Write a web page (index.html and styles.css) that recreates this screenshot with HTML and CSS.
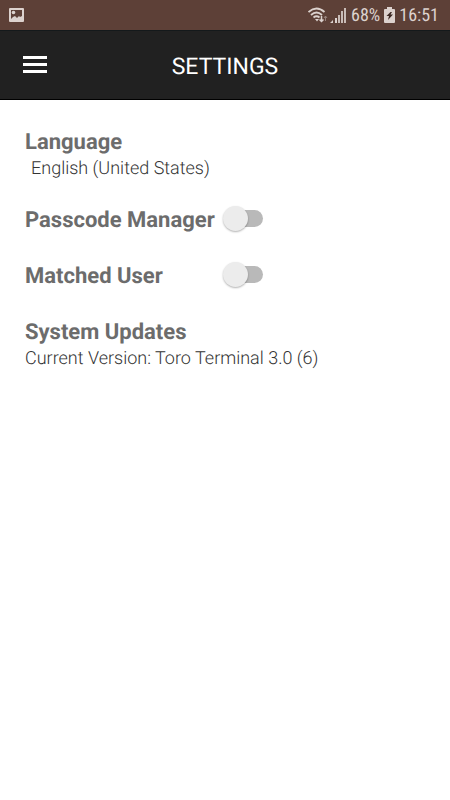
FILE: index.html
```html
<!DOCTYPE html>
<html lang="en">
<head>
<meta charset="utf-8">
<meta name="viewport" content="width=device-width, initial-scale=1">
<title>Settings</title>
<link rel="stylesheet" href="styles.css">
</head>
<body>
<div class="status">
  <svg width="15" height="14" viewBox="0 0 15 14" aria-hidden="true">
    <rect width="15" height="14" rx="1" fill="#dcd2ce"/>
    <path d="M2 2h11v6l-2 1-1-1-2 2-2-2-2 1-2 2z" fill="#5d4037"/>
    <circle cx="4.500" cy="4.500" r="1.800" fill="#dcd2ce"/>
  </svg>
  <div class="status-right">
    <svg width="20" height="16" viewBox="0 0 20 16" fill="none" stroke="#dcd2ce" stroke-width="1.800" aria-hidden="true">
      <path d="M.5 5Q8.500-2 16.500 5M3 8Q8.500 3 14 8M5.500 10.500Q8.500 8 11.500 10.500"/>
      <path d="M7 12h4l-2 2.500z" fill="#dcd2ce" stroke="none"/>
      <path d="M13.500 9v6M11.500 12.500l2 2 2-2" stroke-width="1.500"/>
      <path d="M17.500 14V9M16 11l1.500-2 1.500 2" stroke="#98847d" stroke-width="1"/>
    </svg>
    <svg class="signal" width="16" height="15" viewBox="0 0 16 15" fill="#dcd2ce" aria-hidden="true">
      <path d="M0 15l3-3v3zM5 10h2v5H5z"/>
      <path d="M8 7h2v8H8zM11 3h2v12h-2zM14 0h2v15h-2z" opacity=".85"/>
    </svg>
    <span class="battery-text">68%</span>
    <svg class="battery" width="11" height="16" viewBox="0 0 11 16" aria-hidden="true">
      <path d="M3 0h5v2h2a1 1 0 0 1 1 1v12a1 1 0 0 1-1 1H1a1 1 0 0 1-1-1V3a1 1 0 0 1 1-1h2z" fill="#dcd2ce"/>
      <path d="M6.500 5L2.500 9H5l-1 4 5-5.500H6.500L8 5z" fill="#3b2823"/>
    </svg>
    <span>16:51</span>
  </div>
</div>
<header class="bar">
  <button class="menu" type="button" aria-label="Menu">
    <svg width="24" height="18" viewBox="0 0 24 18" fill="#fff" aria-hidden="true">
      <path d="M0 0h24v3H0zM0 7h24v3H0zM0 14h24v3H0z"/>
    </svg>
  </button>
  <h1>SETTINGS</h1>
</header>
<main>
  <section>
    <h2>Language</h2>
    <p class="language">English (United States)</p>
  </section>
  <div class="toggles">
    <label for="passcode">Passcode Manager</label>
    <input id="passcode" class="switch" type="checkbox" role="switch">
    <label for="matched">Matched User</label>
    <input id="matched" class="switch" type="checkbox" role="switch">
  </div>
  <section>
    <h2>System Updates</h2>
    <p>Current Version: Toro Terminal 3.0 (6)</p>
  </section>
</main>
</body>
</html>
```
FILE: styles.css
```css
* {
  box-sizing: border-box;
}

body {
  margin: 0;
  background: #fff;
  color: #6c6c6c;
  font-family: Roboto, sans-serif;
  text-rendering: geometricPrecision;
}

h1, h2, p {
  margin: 0;
}

.status {
  display: flex;
  align-items: center;
  justify-content: space-between;
  height: 30px;
  padding: 0 11px 0 9px;
  background: #5d4037;
  color: #dcd2ce;
  font-family: "Roboto Condensed", Roboto, sans-serif;
  font-size: 18px;
}

.status-right {
  display: flex;
  align-items: center;
}

.signal {
  margin-left: 2px;
}

.battery-text {
  margin-left: 5px;
}

.battery {
  margin: 0 4px;
}

.bar {
  display: grid;
  grid-template-columns: 70px 1fr 70px;
  align-items: center;
  height: 70px;
  border-top: 1px solid #14191b;
  border-bottom: 1px solid #000;
  background: #212121;
  color: #fff;
}

.menu {
  display: flex;
  padding: 10px 23px;
  border: 0;
  background: none;
}

h1 {
  padding-top: 4px;
  font-size: 23px;
  font-weight: 400;
  line-height: 28px;
  text-align: center;
}

main {
  display: grid;
  gap: 26px;
  padding: 28px 25px;
}

h2, label {
  font-size: 22px;
  font-weight: 700;
  line-height: 30px;
}

p {
  color: #333;
  font-size: 18px;
  font-weight: 300;
  line-height: 22px;
}

.language {
  padding-left: 6px;
}

.toggles {
  display: grid;
  grid-template-columns: max-content max-content;
  gap: 26px 8px;
}

.switch {
  appearance: none;
  position: relative;
  width: 40px;
  height: 25px;
  margin: 0;
}

.switch::before {
  content: "";
  position: absolute;
  inset: 4px 0 4px 4px;
  border-radius: 9px;
  background: #b9b9b9;
}

.switch::after {
  content: "";
  position: absolute;
  top: 0;
  left: 0;
  width: 25px;
  height: 25px;
  border-radius: 50%;
  background: #ececec;
  box-shadow: 0 1px 2px rgba(0, 0, 0, .3);
}

.switch:checked::after {
  left: 15px;
}
```
